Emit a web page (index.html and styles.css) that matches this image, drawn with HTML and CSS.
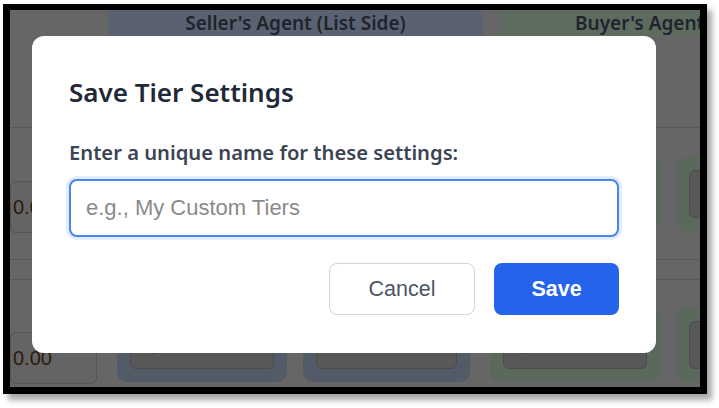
FILE: index.html
```html
<!DOCTYPE html>
<html lang="en">
<head>
<meta charset="utf-8">
<title>Save Tier Settings</title>
<link rel="stylesheet" href="styles.css">
</head>
<body>
<div class="frame">
  <div class="app dimmed">
    <div class="head-row">
      <div class="head-blank"></div>
      <div class="head seller">Seller's Agent (List Side)</div>
      <div class="head-gap"></div>
      <div class="head buyer">Buyer's Agent (Selling Side)</div>
    </div>
    <div class="row row-sub"></div>
    <div class="row row-a">
      <div class="cell-left"><div class="num-box">0.00</div></div>
      <div class="tier blue"><div class="tier-input">$</div></div>
      <div class="tier blue"><div class="tier-input pct">%</div></div>
      <div class="tier green"><div class="tier-input">$</div></div>
      <div class="tier green"><div class="tier-input"></div></div>
    </div>
    <div class="row row-thin"></div>
    <div class="row row-b">
      <div class="cell-left"><div class="num-box">0.00</div></div>
      <div class="tier blue"><div class="tier-input">$</div></div>
      <div class="tier blue"><div class="tier-input pct">%</div></div>
      <div class="tier green"><div class="tier-input">$</div></div>
      <div class="tier green"><div class="tier-input"></div></div>
    </div>
  </div>
  <div class="overlay">
    <div class="modal" role="dialog" aria-labelledby="dlg-title">
      <h2 class="modal-title" id="dlg-title">Save Tier Settings</h2>
      <label class="field-label" for="tier-name">Enter a unique name for these settings:</label>
      <input class="field-input" id="tier-name" type="text" placeholder="e.g., My Custom Tiers">
      <div class="actions">
        <button class="btn btn-cancel" type="button">Cancel</button>
        <button class="btn btn-save" type="button">Save</button>
      </div>
    </div>
  </div>
</div>
</body>
</html>
```
FILE: styles.css
```css
* { box-sizing: border-box; }
html, body { margin: 0; padding: 0; background: #ffffff; }
body { width: 719px; height: 408px; overflow: hidden; }

.frame {
  position: relative;
  margin: 4px 0 0 3px;
  width: 704px;
  height: 390px;
  border: 7px solid #000;
  border-top-width: 6px;
  overflow: hidden;
  box-shadow: 5px 6px 6px rgba(0,0,0,0.35);
  background: #666666;
}

/* background page, drawn in its dimmed (behind-backdrop) colours */
.app {
  width: 100%;
  height: 100%;
  background: #666666;
  font-family: "Noto Sans", "Open Sans", sans-serif;
  color: #1f242b;
}
.head-row { display: flex; height: 26px; }
.head-blank { flex: none; width: 98px; background: #666666; }
.head {
  flex: none;
  height: 26px;
  display: flex;
  align-items: center;
  justify-content: center;
  font-size: 19px;
  font-weight: 600;
  white-space: nowrap;
  color: #1e242c;
}
.seller { width: 375px; background: #5a6271; }
.head-gap { flex: none; width: 17px; background: #666666; }
.buyer { width: 402px; background: #5e6c60; }

.row { display: flex; align-items: flex-start; border-bottom: 1px solid #585858; }
.row-sub { height: 92px; }
.row-a { height: 132px; padding-top: 29px; }
.row-thin { height: 20px; }
.row-b { height: 140px; padding-top: 28px; }

.cell-left { flex: none; width: 107px; padding-top: 24px; }
.num-box {
  width: 87px;
  height: 52px;
  border: 1px solid #555555;
  border-radius: 6px;
  background: #646464;
  display: flex;
  align-items: center;
  padding-left: 2px;
  font-family: "Liberation Sans", Arial, sans-serif;
  font-size: 20px;
  color: #2a1c0c;
  overflow: hidden;
}
.tier {
  flex: none;
  width: 170px;
  height: 74px;
  margin-right: 16px;
  border-radius: 10px;
  padding: 13px;
}
.tier.blue { background: #535b68; }
.tier.blue + .tier.blue { width: 167px; margin-right: 20px; }
.tier.green { background: #5a695c; }
.tier-input {
  height: 48px;
  border: 1px solid #4c4c4c;
  border-radius: 6px;
  background: #585858;
  padding: 0 14px 0 16px;
  display: flex;
  align-items: center;
  font-family: "Liberation Sans", Arial, sans-serif;
  font-size: 20px;
  color: #1a1a1a;
}
.tier-input.pct { justify-content: flex-end; padding-right: 12px; }

/* dialog layer */
.overlay {
  position: absolute;
  top: 0;
  left: 0;
  right: 0;
  bottom: 0;
  padding: 26px 0 0 22px;
  display: flex;
  align-items: flex-start;
}
.modal {
  width: 624px;
  height: 317px;
  background: #ffffff;
  border-radius: 12px;
  padding: 39px 37px 0 37px;
  display: flex;
  flex-direction: column;
  align-items: flex-start;
  font-family: "Noto Sans", "Open Sans", sans-serif;
}
.modal-title {
  margin: 0;
  font-size: 26px;
  line-height: 34px;
  font-weight: 600;
  color: #1f2937;
}
.field-label {
  margin-top: 29px;
  font-size: 20.2px;
  line-height: 28px;
  font-weight: 600;
  color: #3b4452;
}
.field-input {
  margin-top: 13px;
  width: 550px;
  height: 58px;
  border: 2px solid #4a84ee;
  border-radius: 8px;
  box-shadow: 0 0 0 3px rgba(59,130,246,0.14);
  padding: 0 15px;
  font-family: "Liberation Sans", Arial, sans-serif;
  font-size: 22px;
  color: #1f2937;
  outline: none;
}
.field-input::placeholder { color: #8a8a8a; }
.actions {
  margin-top: 26px;
  width: 550px;
  display: flex;
  justify-content: flex-end;
  gap: 19px;
}
.btn {
  height: 52px;
  border-radius: 8px;
  font-family: "Liberation Sans", Arial, sans-serif;
  font-size: 21.5px;
  cursor: pointer;
}
.btn-cancel {
  width: 146px;
  background: #ffffff;
  border: 1px solid #d1d5db;
  color: #4b5563;
}
.btn-save {
  width: 125px;
  background: #2563eb;
  border: none;
  color: #ffffff;
  font-weight: 700;
}
```
